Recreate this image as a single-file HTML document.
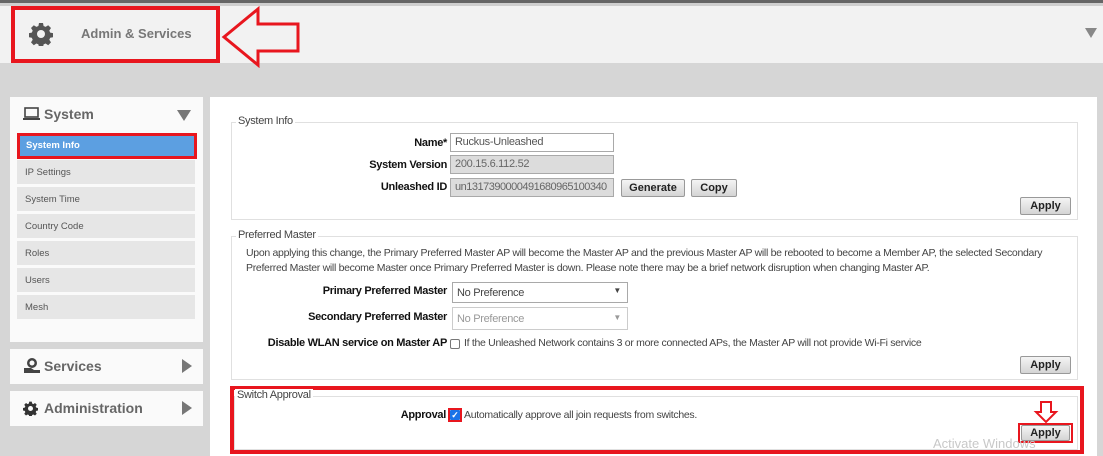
<!DOCTYPE html>
<html><head><meta charset="utf-8"><style>
*{box-sizing:border-box;margin:0;padding:0}
body{width:1103px;height:456px;overflow:hidden;background:#d6d6d6;font-family:"Liberation Sans",Arial,sans-serif;position:relative}
.a{position:absolute}
.lbl{position:absolute;font-size:11px;font-weight:bold;color:#111;text-align:right;letter-spacing:-0.3px;white-space:nowrap}
.inp{position:absolute;height:19px;border:1px solid #a9a9a9;font-size:11px;color:#555;padding:2px 4px;letter-spacing:-0.3px;background:#fff;white-space:nowrap;overflow:hidden}
.dis{background:#dcdcdc;color:#666}
.btn{position:absolute;height:18px;border:1px solid #999;border-radius:2px;background:linear-gradient(#f4f4f4,#d4d4d4);font-size:11px;font-weight:bold;color:#222;text-align:center;line-height:16px}
.fs{position:absolute;border:1px solid #e0e0e0}
.lg{position:absolute;background:#fff;font-size:11px;color:#444;padding:0 2px;letter-spacing:-0.3px}
.item{position:absolute;left:17px;width:178px;height:24px;background:#e6e6e6;font-size:9.5px;color:#555;padding:7px 0 0 8px}
.txt{position:absolute;font-size:10.5px;color:#444;letter-spacing:-0.3px;white-space:nowrap}
</style></head><body>
<div class="a" style="left:0;top:0;width:1103px;height:3px;background:#666"></div>
<div class="a" style="left:0;top:3px;width:1103px;height:3px;background:#cfcfcf"></div>
<div class="a" style="left:0;top:6px;width:1103px;height:57px;background:#f2f2f2"></div>
<div class="a" style="left:11px;top:6px;width:209px;height:57px;border:4px solid #e8161e"></div>
<svg class="a" style="left:29px;top:22px" width="24" height="24" viewBox="0 0 24 24"><path fill="#555" d="M10 1h4l.6 3 2 .9 2.6-1.7 2.8 2.8-1.7 2.6.9 2 3 .6v4l-3 .6-.9 2 1.7 2.6-2.8 2.8-2.6-1.7-2 .9-.6 3h-4l-.6-3-2-.9-2.6 1.7-2.8-2.8 1.7-2.6-.9-2-3-.6v-4l3-.6.9-2-1.700-2.6 2.8-2.8 2.6 1.7 2-.9z"/><circle cx="12" cy="12" r="4" fill="#f2f2f2"/></svg>
<div class="a" style="left:81px;top:26px;font-size:13px;font-weight:bold;color:#777">Admin &amp; Services</div>
<svg class="a" style="left:220px;top:6px" width="84" height="62"><path d="M4 31 L38 3 L38 18 L78 18 L78 45 L38 45 L38 59 Z" fill="none" stroke="#e8161e" stroke-width="3"/></svg>
<div class="a" style="left:1085px;top:28px;width:0;height:0;border-left:6px solid transparent;border-right:6px solid transparent;border-top:10px solid #888"></div>

<div class="a" style="left:10px;top:97px;width:193px;height:245px;background:#fafafa"></div>
<svg class="a" style="left:23px;top:107px" width="17" height="14"><rect x="2" y="1" width="13" height="9" fill="none" stroke="#444" stroke-width="1.6"/><rect x="0" y="11" width="17" height="2" fill="#444"/></svg>
<div class="a" style="left:44px;top:106px;font-size:14px;font-weight:bold;color:#666">System</div>
<div class="a" style="left:177px;top:110px;border-left:7px solid transparent;border-right:7px solid transparent;border-top:11px solid #777"></div>
<div class="a" style="left:17px;top:133px;width:180px;height:26px;border:3px solid #e8161e;background:#5c9fe1;font-size:9.5px;font-weight:bold;color:#fff;padding:4px 0 0 6px">System Info</div>
<div class="item" style="top:160px">IP Settings</div>
<div class="item" style="top:187px">System Time</div>
<div class="item" style="top:214px">Country Code</div>
<div class="item" style="top:241px">Roles</div>
<div class="item" style="top:268px">Users</div>
<div class="item" style="top:295px">Mesh</div>

<div class="a" style="left:10px;top:349px;width:193px;height:35px;background:#fafafa"></div>
<svg class="a" style="left:23px;top:357px" width="18" height="17"><circle cx="9" cy="6" r="5" fill="#444"/><circle cx="9" cy="6" r="2.5" fill="#fafafa"/><path d="M1 11h7l3 2h6v3H1z" fill="#444"/></svg>
<div class="a" style="left:44px;top:358px;font-size:14px;font-weight:bold;color:#666">Services</div>
<div class="a" style="left:182px;top:359px;border-top:7px solid transparent;border-bottom:7px solid transparent;border-left:10px solid #777"></div>
<div class="a" style="left:10px;top:391px;width:193px;height:35px;background:#fafafa"></div>
<svg class="a" style="left:23px;top:401px" width="15" height="15" viewBox="0 0 24 24"><path fill="#333" d="M10 1h4l.6 3 2 .9 2.6-1.7 2.8 2.8-1.7 2.6.9 2 3 .6v4l-3 .6-.9 2 1.7 2.6-2.8 2.8-2.6-1.7-2 .9-.6 3h-4l-.6-3-2-.9-2.6 1.7-2.8-2.8 1.7-2.6-.9-2-3-.6v-4l3-.6.9-2-1.7-2.6 2.8-2.8 2.6 1.7 2-.9z"/><circle cx="12" cy="12" r="4" fill="#fafafa"/></svg>
<div class="a" style="left:44px;top:400px;font-size:14px;font-weight:bold;color:#666">Administration</div>
<div class="a" style="left:182px;top:401px;border-top:7px solid transparent;border-bottom:7px solid transparent;border-left:10px solid #777"></div>

<div class="a" style="left:210px;top:97px;width:887px;height:359px;background:#fff"></div>

<div class="fs" style="left:231px;top:122px;width:847px;height:98px"></div>
<div class="lg" style="left:236px;top:115px">System Info</div>
<div class="lbl" style="left:300px;width:147px;top:137px">Name*</div>
<div class="inp" style="left:450px;top:133px;width:164px">Ruckus-Unleashed</div>
<div class="lbl" style="left:300px;width:147px;top:159px">System Version</div>
<div class="inp dis" style="left:450px;top:155px;width:164px">200.15.6.112.52</div>
<div class="lbl" style="left:300px;width:147px;top:181px">Unleashed ID</div>
<div class="inp dis" style="left:450px;top:178px;width:164px;letter-spacing:-0.5px">un1317390000491680965100340</div>
<div class="btn" style="left:621px;top:179px;width:64px">Generate</div>
<div class="btn" style="left:691px;top:179px;width:46px">Copy</div>
<div class="btn" style="left:1020px;top:197px;width:51px">Apply</div>

<div class="fs" style="left:231px;top:236px;width:847px;height:144px"></div>
<div class="lg" style="left:236px;top:229px">Preferred Master</div>
<div class="txt" style="left:246px;top:247px">Upon applying this change, the Primary Preferred Master AP will become the Master AP and the previous Master AP will be rebooted to become a Member AP, the selected Secondary</div>
<div class="txt" style="left:246px;top:262px">Preferred Master will become Master once Primary Preferred Master is down. Please note there may be a brief network disruption when changing Master AP.</div>
<div class="lbl" style="left:250px;width:197px;top:285px">Primary Preferred Master</div>
<div class="inp" style="left:452px;top:282px;width:176px;height:21px;padding-top:4px;color:#444">No Preference<span style="position:absolute;right:6px;top:3px;font-size:8px">▼</span></div>
<div class="lbl" style="left:250px;width:197px;top:311px">Secondary Preferred Master</div>
<div class="inp" style="left:452px;top:307px;width:176px;height:23px;padding-top:5px;color:#999;border-color:#ccc">No Preference<span style="position:absolute;right:6px;top:5px;font-size:8px">▼</span></div>
<div class="lbl" style="left:240px;width:207px;top:337px">Disable WLAN service on Master AP</div>
<div class="a" style="left:450px;top:339px;width:10px;height:10px;border:1px solid #777;border-radius:2px"></div>
<div class="txt" style="left:464px;top:337px">If the Unleashed Network contains 3 or more connected APs, the Master AP will not provide Wi-Fi service</div>
<div class="btn" style="left:1020px;top:356px;width:51px">Apply</div>

<div class="a" style="left:230px;top:386px;width:854px;height:68px;border:4px solid #e8161e"></div>
<div class="fs" style="left:234px;top:396px;width:844px;height:54px"></div>
<div class="lg" style="left:235px;top:389px">Switch Approval</div>
<div class="lbl" style="left:350px;width:96px;top:409px">Approval</div>
<div class="a" style="left:448px;top:408px;width:14px;height:14px;border:2px solid #e8161e"></div>
<div class="a" style="left:450px;top:410px;width:10px;height:10px;background:#1a73e8;border-radius:1px;color:#fff;font-size:9px;line-height:10px;text-align:center;font-weight:bold">✓</div>
<div class="txt" style="left:464px;top:409px">Automatically approve all join requests from switches.</div>
<svg class="a" style="left:1033px;top:400px" width="26" height="24"><path d="M8 2h10v10h5L13 22 3 12h5z" fill="#fff" stroke="#e8161e" stroke-width="2"/></svg>
<div class="a" style="left:1018px;top:423px;width:55px;height:20px;border:2px solid #e8161e"></div>
<div class="btn" style="left:1021px;top:425px;width:49px;height:16px;line-height:14px">Apply</div>
<div class="a" style="left:933px;top:436px;font-size:13px;color:#c8c8c8">Activate Windows</div>
</body></html>
